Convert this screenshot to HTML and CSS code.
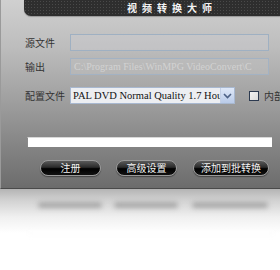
FILE: index.html
```html
<!DOCTYPE html>
<html>
<head>
<meta charset="utf-8">
<link rel="stylesheet" href="styles.css">
</head>
<body>
<div class="stage">
  <div class="panel">
    <div class="titlebar"><span class="title">视频转换大师</span></div>
    <div class="form">
      <div class="row r1">
        <span class="label">源文件</span>
        <div class="field"></div>
      </div>
      <div class="row r2">
        <span class="label">输出</span>
        <div class="field disabled">C:\Program Files\WinMPG VideoConvert\C</div>
      </div>
      <div class="row r3">
        <span class="label">配置文件</span>
        <div class="select">
          <span class="sel-text">PAL DVD Normal Quality 1.7 Hou</span>
          <span class="sel-btn"><svg width="9" height="6" viewBox="0 0 9 6"><path d="M1 1 L4.5 4.5 L8 1" fill="none" stroke="#4d6185" stroke-width="1.6"/></svg></span>
        </div>
        <span class="check"></span>
        <span class="check-label">内部</span>
      </div>
    </div>
    <div class="progress"></div>
    <div class="buttons">
      <span class="btn b1">注册</span>
      <span class="btn b2">高级设置</span>
      <span class="btn b3">添加到批转换</span>
    </div>
  </div>
  <div class="reflection">
    <div class="ref-buttons">
      <span class="rb rb1"></span><span class="rb rb2"></span><span class="rb rb3"></span>
    </div>
    <div class="ref-progress"></div>
  </div>
</div>
</body>
</html>
```
FILE: styles.css
```css
html, body {
  margin: 0;
  padding: 0;
  background: #ffffff;
  width: 280px;
  height: 270px;
  overflow: hidden;
}
.stage {
  width: 280px;
  height: 270px;
  overflow: hidden;
  font-family: "Noto Sans CJK SC", "Noto Sans", sans-serif;
}
.panel {
  position: relative;
  width: 280px;
  height: 189px;
  box-sizing: border-box;
  background: linear-gradient(to bottom, #d0d0d0 0%, #bdbdbd 25%, #a3a3a3 50%, #878787 75%, #6c6c6c 100%);
  border-left: 1px solid #9a9a9a;
  border-bottom: 1px solid #4a4a4a;
  overflow: hidden;
  display: flex;
  flex-direction: column;
}
.titlebar {
  margin-left: 23px;
  height: 16px;
  border-bottom-left-radius: 7px;
  background-color: #2e2e2e;
  background-image: radial-gradient(circle, #4a4a4a 0.8px, transparent 1px);
  background-size: 3px 3px;
  box-shadow: 0 1px 1px rgba(0,0,0,0.25);
  display: flex;
  align-items: center;
  justify-content: center;
  padding-left: 40px;
}
.title {
  color: #f4f4f4;
  font-size: 10px;
  letter-spacing: 5px;
  line-height: 16px;
  font-weight: bold;
}
.form {
  display: flex;
  flex-direction: column;
  padding-left: 24px;
}
.row {
  display: flex;
  align-items: center;
  height: 17px;
}
.r1 { margin-top: 18px; }
.r2 { margin-top: 7px; }
.r3 { margin-top: 12px; }
.label {
  width: 45px;
  flex: none;
  font-size: 10px;
  color: #333333;
  line-height: 17px;
}
.field {
  width: 199px;
  flex: none;
  height: 17px;
  box-sizing: border-box;
  border: 1px solid #9fb0c2;
  background: rgba(205, 207, 212, 0.35);
  font-family: "Liberation Serif", serif;
  font-size: 10px;
  line-height: 15px;
  padding-left: 3px;
  white-space: nowrap;
  overflow: hidden;
}
.field.disabled {
  color: #d2d2d2;
  border: 1px solid #a3b2c3;
  background: rgba(195, 195, 195, 0.4);
}
.select {
  width: 165px;
  flex: none;
  height: 17px;
  box-sizing: border-box;
  border: 1px solid #a8b8d0;
  background: #eceef2;
  display: flex;
}
.sel-text {
  flex: 1;
  font-family: "Liberation Serif", serif;
  font-size: 10.5px;
  line-height: 15px;
  color: #111;
  padding-left: 2px;
  white-space: nowrap;
  overflow: hidden;
}
.sel-btn {
  width: 13px;
  height: 15px;
  background: linear-gradient(to bottom, #dfe8f8, #b9cbe9);
  border-left: 1px solid #c3d0e6;
  display: flex;
  align-items: center;
  justify-content: center;
}
.check {
  flex: none;
  margin-left: 14px;
  width: 8px;
  height: 8px;
  border: 1px solid #2c3a50;
  background: linear-gradient(135deg, #f4f4f4, #dcdcdc);
}
.check-label {
  margin-left: 5px;
  font-size: 10px;
  color: #333333;
  white-space: nowrap;
}
.progress {
  margin-top: 33px;
  margin-left: 26px;
  width: 244px;
  height: 9px;
  background: #ffffff;
  border-left: 1px solid #8a8a8a;
  border-top: 1px solid #d8d8d8;
}
.buttons {
  display: flex;
  margin-top: 13px;
  padding-left: 39px;
}
.btn {
  height: 16px;
  box-sizing: border-box;
  border-radius: 8px;
  border: 1px solid #9a9a9a;
  background: linear-gradient(to bottom, #5a5a5a 0%, #2a2a2a 45%, #000 55%, #111 100%);
  box-shadow: 0 1px 1px rgba(0,0,0,0.4);
  color: #f2f2f2;
  font-size: 10px;
  line-height: 14px;
  text-align: center;
}
.b1 { width: 61px; }
.b2 { width: 61px; margin-left: 15px; }
.b3 { width: 76px; margin-left: 16px; }
.reflection {
  position: relative;
  height: 81px;
  background: linear-gradient(to bottom, #b4b4b4 0px, #cfcfcf 10px, #f0f0f0 28px, #ffffff 44px);
}
.ref-buttons {
  display: flex;
  padding-left: 38px;
  padding-top: 13px;
  filter: blur(2.5px);
}
.rb {
  height: 6px;
  background: #a8a8a8;
  border-radius: 3px;
}
.rb1 { width: 64px; }
.rb2 { width: 64px; margin-left: 12px; }
.rb3 { width: 76px; margin-left: 14px; }
.ref-progress {
  margin: 22px 0 0 28px;
  width: 246px;
  height: 6px;
  background: #fdfdfd;
  filter: blur(2px);
}
```
